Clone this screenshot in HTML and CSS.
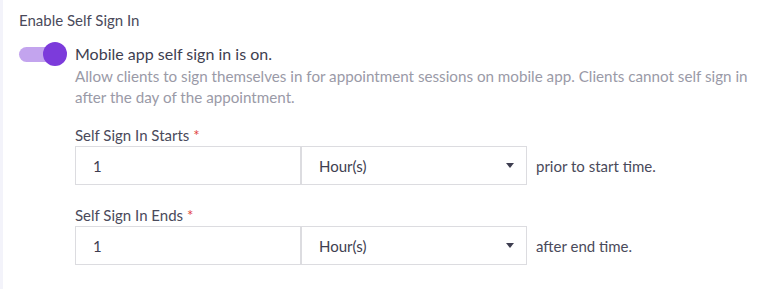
FILE: index.html
```html
<!DOCTYPE html>
<html>
<head>
<meta charset="utf-8">
<link rel="stylesheet" href="styles.css">
</head>
<body>
<div class="panel">
  <div class="title">Enable Self Sign In</div>
  <div class="toggle-row">
    <span class="toggle"><span class="track"></span><span class="thumb"></span></span>
    <span class="toggle-label">Mobile app self sign in is on.</span>
  </div>
  <div class="indent">
    <p class="desc">Allow clients to sign themselves in for appointment sessions on mobile app. Clients cannot self sign in after the day of the appointment.</p>
    <div class="group">
      <div class="label">Self Sign In Starts <span class="req">*</span></div>
      <div class="row">
        <div class="input">1</div>
        <div class="select"><span>Hour(s)</span><span class="caret"></span></div>
        <span class="suffix">prior to start time.</span>
      </div>
    </div>
    <div class="group">
      <div class="label">Self Sign In Ends <span class="req">*</span></div>
      <div class="row">
        <div class="input">1</div>
        <div class="select"><span>Hour(s)</span><span class="caret"></span></div>
        <span class="suffix">after end time.</span>
      </div>
    </div>
  </div>
</div>
</body>
</html>
```
FILE: styles.css
```css
html, body {
  margin: 0;
  padding: 0;
  background: #ffffff;
}
body {
  font-family: "Lato", "Liberation Sans", sans-serif;
  font-size: 15px;
  color: #3e3e50;
}
.panel {
  border-left: 3px solid #f3f3fa;
  height: 289px;
  box-sizing: border-box;
  padding: 10px 0 0 16px;
}
.title {
  line-height: 20px;
  color: #4a4a5b;
}
.toggle-row {
  display: flex;
  align-items: center;
  gap: 8px;
  margin-top: 12px;
  height: 24px;
}
.toggle {
  position: relative;
  width: 48px;
  height: 24px;
  flex: none;
}
.track {
  position: absolute;
  left: 0;
  top: 4.5px;
  width: 44px;
  height: 15px;
  border-radius: 8px;
  background: #c3a4ee;
}
.thumb {
  position: absolute;
  right: 0;
  top: 0;
  width: 24px;
  height: 24px;
  border-radius: 50%;
  background: #7c3bdb;
}
.toggle-label {
  font-size: 16px;
  line-height: 20px;
  color: #3e3e50;
}
.indent {
  padding-left: 56px;
}
.desc {
  margin: 0;
  font-size: 15.2px;
  line-height: 21px;
  color: #9a9aa7;
  padding-right: 4px;
}
.group {
  margin-top: 17px;
}
.group + .group {
  margin-top: 20px;
}
.label {
  line-height: 20px;
  color: #4a4a5b;
}
.req {
  color: #e2433d;
}
.row {
  display: flex;
  align-items: center;
  margin-top: 1px;
}
.input, .select {
  box-sizing: border-box;
  height: 39px;
  border: 1px solid #dcdce0;
  display: flex;
  align-items: center;
  padding-left: 17px;
  color: #3e3e50;
}
.input {
  width: 226px;
}
.select {
  width: 227px;
  border-left-width: 2px;
  margin-left: -1px;
  justify-content: space-between;
  padding-right: 12px;
}
.caret {
  width: 0;
  height: 0;
  border-left: 4.5px solid transparent;
  border-right: 4.5px solid transparent;
  border-top: 5px solid #3e3e50;
}
.suffix {
  margin-left: 9px;
  color: #4a4a5b;
}
```
